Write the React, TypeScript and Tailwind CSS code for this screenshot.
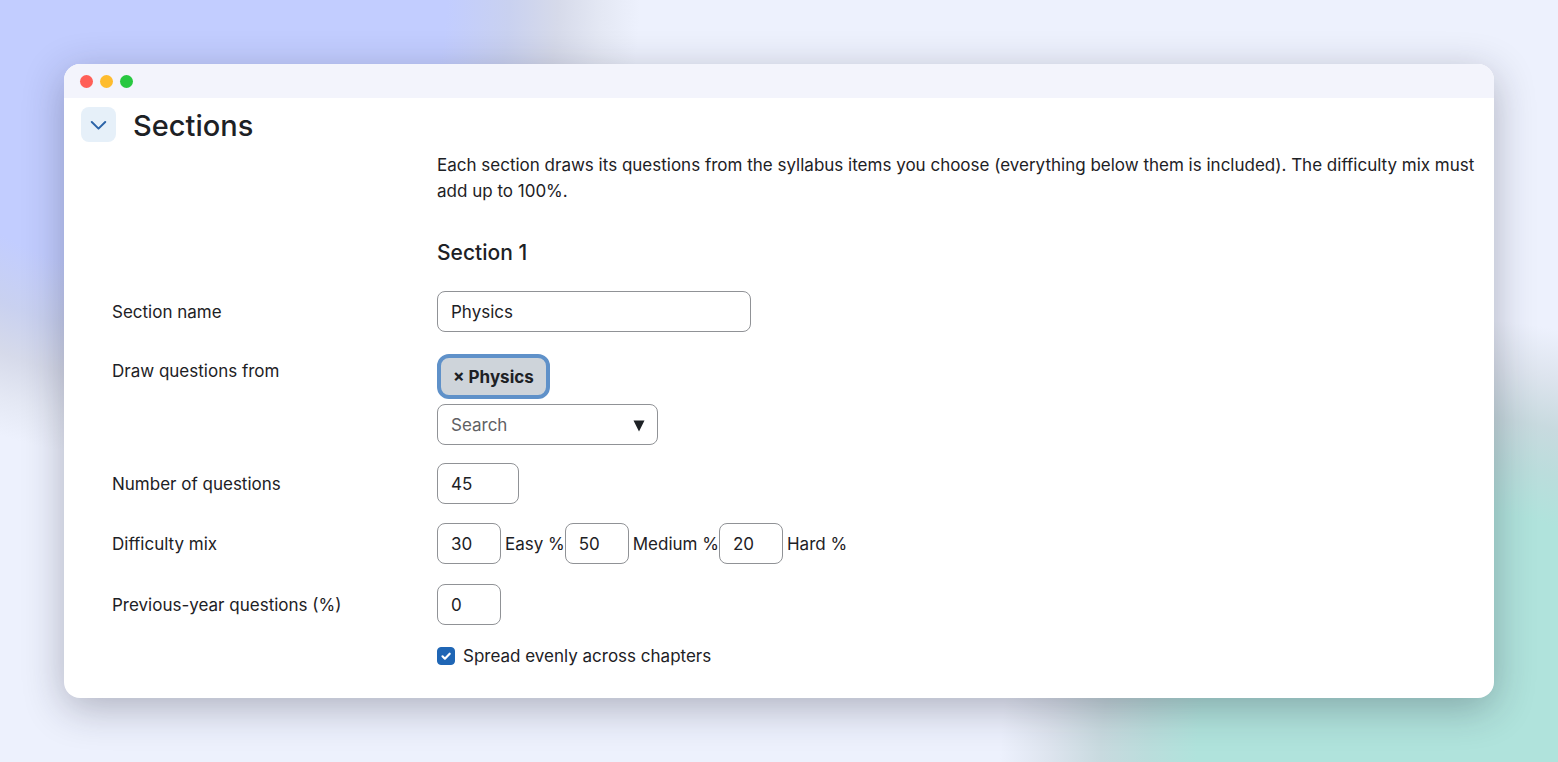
import { useState } from "react";
import type { ReactNode } from "react";

const field =
  "h-[41px] rounded-lg border border-[#909296] bg-white px-[13px] text-[17px] text-[#1d2125] outline-none placeholder:text-[#5f6164]";

function Row({
  label,
  htmlFor,
  children,
  className = "",
}: {
  label?: string;
  htmlFor?: string;
  children: ReactNode;
  className?: string;
}) {
  return (
    <div className={`grid grid-cols-[325px_1fr] ${className}`}>
      <div className="pt-2">{label && <label htmlFor={htmlFor}>{label}</label>}</div>
      <div>{children}</div>
    </div>
  );
}

function MixField({ id, label, initial }: { id: string; label: string; initial: string }) {
  return (
    <>
      <input id={id} defaultValue={initial} className={`${field} w-16`} />
      <label htmlFor={id} className="pl-1">
        {label}
      </label>
    </>
  );
}

export default function App() {
  const [open, setOpen] = useState(true);
  const [tags, setTags] = useState(["Physics"]);
  return (
    <div className="min-h-screen bg-[#edf1fd] bg-[radial-gradient(ellipse_484px_460px_at_156px_0,#c2cdff_0,#c2cdff_60%,#c9d1f0_73%,#d6daea_83%,#e4e8f4_92%,#edf1fd00_100%),radial-gradient(ellipse_458px_443px_at_calc(100%_-_100px)_100%,#b0e3dc_0,#b0e3dc_57%,#bbdddc_68%,#c8dadf_78%,#dde4ee_89%,#edf1fd00_100%)] p-16 font-['Inter','Liberation_Sans',sans-serif] text-[17px] leading-[26px] text-[#1d2125]">
      <main className="overflow-clip rounded-2xl bg-white shadow-[0_10px_40px_rgba(30,30,50,0.3)]">
        <div className="flex h-[34px] items-center gap-[7px] bg-[#f3f4fc] px-4">
          <span className="size-[13px] rounded-full bg-[#ff5f57]" />
          <span className="size-[13px] rounded-full bg-[#febc2e]" />
          <span className="size-[13px] rounded-full bg-[#28c840]" />
        </div>
        <div className="flex items-start gap-[17px] px-[17px] pt-[9px]">
          <button
            type="button"
            aria-label="Toggle sections"
            aria-expanded={open}
            onClick={() => setOpen(!open)}
            className="grid size-[35px] place-items-center rounded-lg bg-[#e6f0f9]"
          >
            <svg width="17" height="10" viewBox="0 0 17 10" fill="none" stroke="#2c64a8" strokeWidth="2" strokeLinecap="round" strokeLinejoin="round">
              <path d="M1.8 2 8.5 8.6 15.2 2" />
            </svg>
          </button>
          <h1 className="text-[29px] leading-[38px] font-medium">Sections</h1>
        </div>
        {open && (
          <form className="px-12 pt-[7px] pb-[29px]" onSubmit={(e) => e.preventDefault()}>
            <div className="-mr-10 pl-[325px]">
              <p>
                Each section draws its questions from the syllabus items you choose (everything below them is
                included). The difficulty mix must add up to 100%.
              </p>
              <h2 className="pt-[35px] text-[21px] leading-7 font-medium">Section 1</h2>
            </div>
            <Row label="Section name" htmlFor="name" className="pt-6">
              <input id="name" defaultValue="Physics" className={`${field} w-[314px]`} />
            </Row>
            <Row label="Draw questions from" htmlFor="search" className="pt-[18px]">
              <div className="flex flex-col items-start gap-[5px] pt-1">
                {tags.map((tag) => (
                  <button
                    key={tag}
                    type="button"
                    onClick={() => setTags(tags.filter((t) => t !== tag))}
                    className="flex h-[45px] items-center rounded-xl border-4 border-[#5f91c9] bg-[#ced4da] px-3 font-bold"
                  >
                    × {tag}
                  </button>
                ))}
                <div className="relative flex">
                  <input id="search" placeholder="Search" className={`${field} w-[221px]`} />
                  <svg className="pointer-events-none absolute top-4 right-[13px]" width="12" height="12" viewBox="0 0 12 12" fill="#1d2125">
                    <path d="M0.5 0.5h11L6 11.5z" />
                  </svg>
                </div>
              </div>
            </Row>
            <Row label="Number of questions" htmlFor="count" className="pt-[18px]">
              <input id="count" defaultValue="45" className={`${field} w-[82px]`} />
            </Row>
            <Row label="Difficulty mix" htmlFor="easy" className="pt-[19px]">
              <div className="flex items-center">
                <MixField id="easy" label="Easy %" initial="30" />
                <MixField id="medium" label="Medium %" initial="50" />
                <MixField id="hard" label="Hard %" initial="20" />
              </div>
            </Row>
            <Row label="Previous-year questions (%)" htmlFor="previous" className="pt-5">
              <input id="previous" defaultValue="0" className={`${field} w-16`} />
            </Row>
            <div className="pt-[18px] pl-[325px]">
              <label className="flex w-fit items-center gap-2">
                <span className="relative grid size-[18px]">
                  <input type="checkbox" defaultChecked className="peer size-[18px] appearance-none rounded border border-[#8f959e] checked:border-[#1f66b5] checked:bg-[#1f66b5]" />
                  <svg className="pointer-events-none absolute inset-0 opacity-0 peer-checked:opacity-100" width="18" height="18" viewBox="0 0 18 18" fill="none" stroke="white" strokeWidth="2.2" strokeLinecap="round" strokeLinejoin="round">
                    <path d="m5.5 9.3 2.4 2.4 4.8-5" />
                  </svg>
                </span>
                Spread evenly across chapters
              </label>
            </div>
          </form>
        )}
      </main>
    </div>
  );
}
